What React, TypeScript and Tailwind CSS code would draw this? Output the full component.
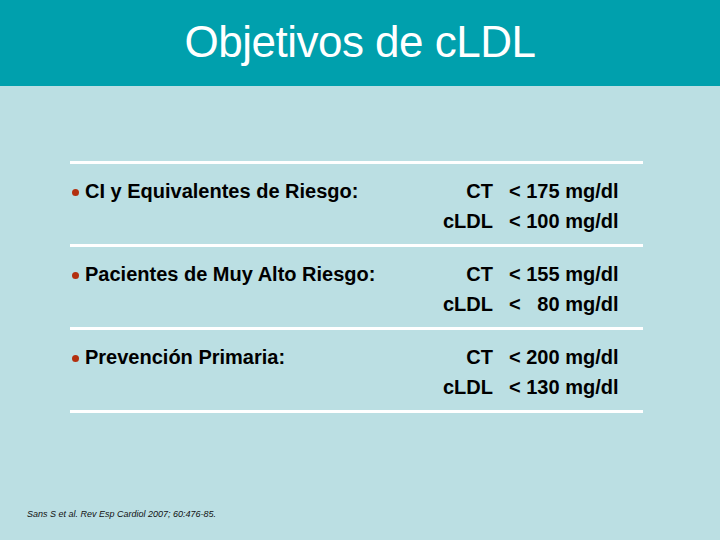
const rows = [
  { label: "CI y Equivalentes de Riesgo:", ct: "< 175", ldl: "< 100" },
  { label: "Pacientes de Muy Alto Riesgo:", ct: "< 155", ldl: "<   80" },
  { label: "Prevención Primaria:", ct: "< 200", ldl: "< 130" },
];

const Divider = () => <div className="h-[3px] w-full bg-white" />;

const App = () => {
  return (
    <div className="w-[720px] h-[540px] bg-[#bbdfe3] flex flex-col font-['Liberation_Sans',Arial,sans-serif] text-black">
      <div className="h-[86px] bg-[#00a0ad] flex items-center justify-center">
        <h1 className="text-[44px] leading-none tracking-[-0.5px] text-white pb-[2px]">Objetivos de cLDL</h1>
      </div>

      <div className="ml-[70px] w-[573px] mt-[75px]">
        <Divider />
        {rows.map((r) => (
          <div key={r.label}>
            <div className="flex pt-[12px] pb-[8px] text-[20px] font-bold leading-[30px]">
              <div className="w-[353px] pl-[2px] flex items-center self-start h-[30px]">
                <span className="w-[7px] h-[7px] rounded-full bg-[#b3300f] mr-[6px] mt-[2px]" />
                <span>{r.label}</span>
              </div>
              <div className="w-[70px] text-right">
                <div>CT</div>
                <div>cLDL</div>
              </div>
              <div className="pl-[16px] whitespace-pre">
                <div>{r.ct} mg/dl</div>
                <div>{r.ldl} mg/dl</div>
              </div>
            </div>
            <Divider />
          </div>
        ))}
      </div>

      <div className="mt-auto mb-[19px] ml-[27px] text-[9px] italic text-[#111]">
        Sans S et al. Rev Esp Cardiol 2007; 60:476-85.
      </div>
    </div>
  );
};

export default App;
